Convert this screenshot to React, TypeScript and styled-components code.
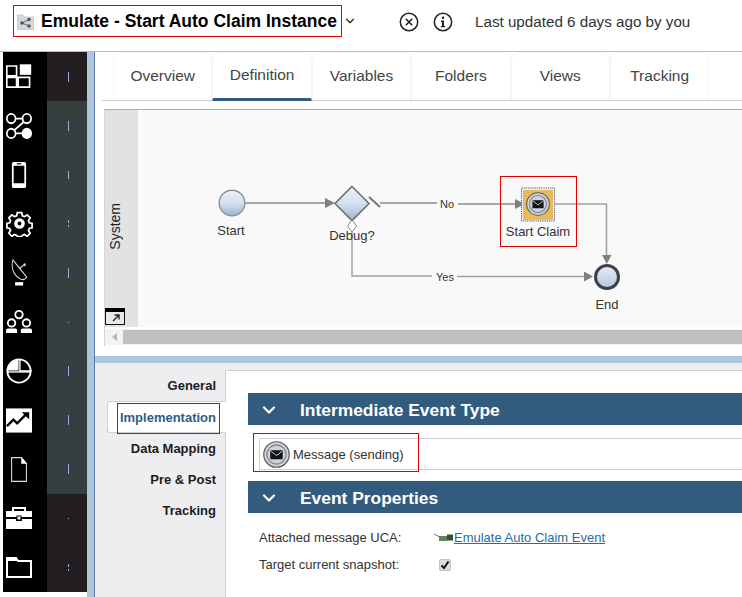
import { ReactNode } from 'react';
import styled, { createGlobalStyle } from 'styled-components';
import { ChevronDown } from 'lucide-react';

const GlobalStyle = createGlobalStyle`
  html, body {
    margin: 0;
    padding: 0;
    background: #fff;
    font-family: "Liberation Sans", Arial, sans-serif;
    color: #222;
  }
`;

const Page = styled.div`
  width: 742px;
  height: 597px;
  overflow: hidden;
  display: flex;
  flex-direction: column;
`;

const Header = styled.header`
  height: 51px;
  flex-shrink: 0;
  display: flex;
  align-items: flex-start;
  border-bottom: 1px solid #bdbdbd;
  box-sizing: content-box;
`;

const TitleBox = styled.div`
  margin: 5px 0 0 13px;
  width: 329px;
  height: 32px;
  flex-shrink: 0;
  box-sizing: border-box;
  border: 1px solid #e00000;
  display: flex;
  align-items: center;
  gap: 7px;
  padding-left: 3px;

  svg {
    flex-shrink: 0;
  }
`;

const Title = styled.h1`
  margin: 0;
  font-size: 17.5px;
  font-weight: 700;
  color: #000;
  white-space: nowrap;
`;

const TitleCaret = styled.div`
  width: 14px;
  margin: 14px 0 0 1px;
  display: flex;
  color: #222;
`;

const HeaderIcons = styled.div`
  display: flex;
  gap: 14px;
  margin: 12px 0 0 42px;
`;

const Updated = styled.div`
  margin: 13px 0 0 22px;
  font-size: 15.2px;
  color: #333;
  white-space: nowrap;
`;

const Body = styled.div`
  flex: 1;
  min-height: 0;
  display: flex;
`;

const Sidebar = styled.nav`
  margin-left: 3px;
  width: 84px;
  height: 540px;
  flex-shrink: 0;
  display: flex;
  flex-direction: column;
`;

const RailRow = styled.div`
  flex: 1;
  display: flex;
`;

const RailIcon = styled.div`
  width: 44px;
  box-sizing: border-box;
  padding-right: 12px;
  background: #000;
  display: flex;
  align-items: center;
  justify-content: center;
`;

const RailTickCell = styled.div<{ $dark: boolean }>`
  width: 40px;
  box-sizing: border-box;
  padding-left: 3px;
  background: ${p => (p.$dark ? '#231f20' : '#353f40')};
  display: flex;
  flex-direction: column;
  align-items: center;
  justify-content: center;
  gap: 2px;
`;

const Tick = styled.span<{ $h: number }>`
  width: 1px;
  height: ${p => p.$h}px;
  background: #8eaee8;
`;

const Splitter = styled.div`
  width: 7px;
  flex-shrink: 0;
  background: #adc6d9;
  border-right: 1px solid #5f78a8;
`;

const Main = styled.main`
  flex: 1;
  min-width: 0;
  display: flex;
  flex-direction: column;
`;

const TabBar = styled.div`
  height: 48px;
  flex-shrink: 0;
  margin-left: 7px;
  padding-left: 11px;
  display: flex;
  border-bottom: 1px solid #c3cbd6;
`;

const Tab = styled.div<{ $active?: boolean }>`
  width: 99.4px;
  box-sizing: border-box;
  display: flex;
  align-items: center;
  justify-content: center;
  padding-bottom: 1px;
  font-size: 15.5px;
  color: #444;
  border: 1px solid #f5f5f5;
  border-bottom: ${p => (p.$active ? '3px solid #335b7e' : 'none')};
  border-radius: 8px 8px 0 0;
  margin-bottom: ${p => (p.$active ? '-1px' : '0')};
`;

const Diagram = styled.section`
  margin: 8px 0 0 9px;
  height: 236px;
  flex-shrink: 0;
  display: flex;
  flex-direction: column;
  border-top: 1px solid #aaa;
  border-left: 1px solid #d5d5d5;
`;

const DiagramBody = styled.div`
  height: 217px;
  flex-shrink: 0;
  display: flex;
`;

const Lane = styled.div`
  width: 33px;
  flex-shrink: 0;
  box-sizing: border-box;
  padding: 15px 13px 0 0;
  position: relative;
  background: #e2e2e2;
  display: flex;
  align-items: center;
  justify-content: center;
`;

const LaneName = styled.span`
  writing-mode: vertical-rl;
  transform: rotate(180deg);
  font-size: 14px;
  color: #222;
`;

const ExpandButton = styled.div`
  position: absolute;
  left: 0;
  bottom: 2px;
  width: 20px;
  height: 17px;
  display: flex;
`;

const Canvas = styled.div`
  flex: 1;
  position: relative;
  background: #f9f9f9;
  overflow: hidden;
`;

const DiagramSvg = styled.svg`
  position: absolute;
  inset: 0;
  width: 100%;
  height: 100%;
`;

const NodeLabel = styled.span<{ $x: number; $y: number; $size?: number }>`
  position: absolute;
  left: ${p => p.$x - 138}px;
  top: ${p => p.$y - 110}px;
  transform: translate(-50%, -50%);
  font-size: ${p => p.$size ?? 13}px;
  line-height: 1;
  color: #333;
  white-space: nowrap;
`;

const Annotation = styled.div`
  position: absolute;
  left: 362px;
  top: 66px;
  width: 77px;
  height: 71px;
  box-sizing: border-box;
  border: 1px solid #e00000;
`;

const ScrollBar = styled.div`
  height: 16px;
  margin-top: 2px;
  flex-shrink: 0;
  display: flex;
  align-items: center;
  background: #f3f3f3;
`;

const ScrollArrow = styled.div`
  width: 18px;
  flex-shrink: 0;
  display: flex;
  justify-content: center;
  &::before {
    content: '';
    border-style: solid;
    border-width: 4px 5px 4px 0;
    border-color: transparent #b5b5b5 transparent transparent;
  }
`;

const ScrollThumb = styled.div`
  flex: 1;
  height: 14px;
  background: #bfbfbf;
`;

const Band = styled.div`
  height: 7px;
  margin-top: 10px;
  flex-shrink: 0;
  background: #adc6d9;
`;

const Lower = styled.div`
  flex: 1;
  min-height: 0;
  display: flex;
  padding-top: 7px;
  background: #eeeef0;
`;

const SideTabs = styled.div`
  width: 130px;
  flex-shrink: 0;
  display: flex;
  flex-direction: column;
`;

const SideTab = styled.div<{ $active?: boolean }>`
  height: 31px;
  margin-left: 12px;
  padding-right: 9px;
  display: flex;
  align-items: center;
  justify-content: flex-end;
  font-size: 13px;
  font-weight: 700;
  color: ${p => (p.$active ? '#335b7e' : '#1c1c1c')};
  box-sizing: border-box;
  ${p =>
    p.$active &&
    `
    background: #fff;
    height: 32px;
    margin-right: -1px;
    padding-right: 10px;
    position: relative;
    z-index: 1;
    border: 1px solid #cfcfcf;
    border-right: none;
    border-radius: 3px 0 0 3px;
  `}
`;

const ActiveLabel = styled.span`
  position: relative;
`;

const ActiveOutline = styled.span`
  position: absolute;
  left: -3px;
  top: -7px;
  width: 103px;
  height: 31px;
  box-sizing: border-box;
  border: 1px solid #e00000;
`;

const Content = styled.div`
  flex: 1;
  min-width: 0;
  background: #fff;
  border-top: 1px solid #cfcfcf;
  border-left: 1px solid #cfcfcf;
  padding: 22px 0 0 22px;
`;

const SectionHeader = styled.div`
  height: 32px;
  box-sizing: border-box;
  padding-top: 2px;
  display: flex;
  align-items: center;
  background: #335b7e;
  color: #fff;
  font-size: 17.4px;
  font-weight: 700;
  white-space: nowrap;
`;

const SectionCaret = styled.div`
  width: 52px;
  flex-shrink: 0;
  display: flex;
  padding-left: 11px;
  box-sizing: border-box;
`;

const EventRow = styled.div`
  position: relative;
  height: 32px;
  margin: 13px 0 11px 11px;
  box-sizing: border-box;
  border: 1px solid #c9d0dc;
  border-right: none;
  display: flex;
  align-items: center;
  gap: 3px;
  padding-left: 3px;
  font-size: 13px;
  color: #333;
`;

const EventAnnotation = styled.div`
  position: absolute;
  left: -7px;
  top: -6px;
  width: 166px;
  height: 39px;
  box-sizing: border-box;
  border: 1px solid #e00000;
`;

const PropList = styled.div`
  margin-left: 11px;
  padding-top: 11px;
`;

const PropRow = styled.div`
  display: grid;
  grid-template-columns: 175px 1fr;
  align-items: center;
  font-size: 13px;
  color: #333;
  height: 27px;
`;

const LinkCell = styled.div`
  display: flex;
  align-items: center;
  gap: 1px;
`;

const UcaLink = styled.a`
  color: #2b6c9f;
  text-decoration: underline;
`;

const Checkbox = styled.div`
  width: 12px;
  height: 12px;
  margin-left: 5px;
  border-radius: 2px;
  background: #dcdcdc;
  border: 1px solid #c4c4c4;
  box-sizing: border-box;
  display: flex;
  align-items: center;
  justify-content: center;
`;

const Stroke = { fill: 'none', stroke: '#fff', strokeWidth: 2 };

const railIcons: ReactNode[] = [
  <svg width="26" height="25" viewBox="0 0 32 30">
    <path d="M1 2h12v12H1zM1 16h12v12H1zM15 16h14v12H15z" {...Stroke} />
    <rect x="17" y="0" width="14" height="13" fill="#fff" />
  </svg>,
  <svg width="26" height="26" viewBox="0 0 30 28" preserveAspectRatio="none">
    <path d="M11 6h9M20 10 9 19M11 22h9" {...Stroke} />
    <circle cx="6" cy="6" r="5" {...Stroke} />
    <circle cx="24" cy="6" r="5" {...Stroke} />
    <circle cx="6" cy="22" r="5" {...Stroke} />
    <circle cx="24" cy="22" r="6" fill="#fff" />
  </svg>,
  <svg width="16" height="26" viewBox="0 0 18 28" preserveAspectRatio="none">
    <path fillRule="evenodd" fill="#fff" d="M1 2a2 2 0 0 1 2-2h12a2 2 0 0 1 2 2v24a2 2 0 0 1-2 2H3a2 2 0 0 1-2-2zM3 4v19h12V4z" />
    <rect x="6.500" y="1.300" width="5" height="1.200" fill="#000" />
  </svg>,
  <svg width="27" height="27" viewBox="0 0 28 28">
    <path
      d="M11.500 1.500h5l.8 3.600 2.400 1 3.100-2 3.500 3.500-2 3.100 1 2.400 3.200.8v5l-3.200.8-1 2.400 2 3.100-3.500 3.500-3.100-2-2.400 1-.8 1.300h-5l-.8-1.300-2.400-1-3.100 2-3.500-3.500 2-3.100-1-2.400-3.200-.8v-5l3.200-.8 1-2.400-2-3.100 3.500-3.500 3.100 2 2.400-1z"
      transform="translate(1.400 1.400) scale(0.9)"
      {...Stroke}
    />
    <circle cx="14" cy="14" r="5.500" fill="#fff" />
    <circle cx="14" cy="14" r="2" fill="#000" />
  </svg>,
  <svg width="19" height="27" viewBox="0 0 26 28" preserveAspectRatio="none">
    <path d="M4 1C1 8 4 17 15 21 19 22 22 20 23 19Z" fill="none" stroke="#ddd" strokeWidth="1.300" />
    <path d="M13 10l6-4" stroke="#ddd" strokeWidth="1.300" />
    <circle cx="20" cy="6" r="1.500" fill="#ddd" />
    <rect x="7" y="24" width="11" height="3.500" fill="#fff" />
  </svg>,
  <svg width="26" height="24" viewBox="0 0 28 26" preserveAspectRatio="none">
    <circle cx="14" cy="5" r="4" {...Stroke} />
    <circle cx="6" cy="14" r="4" {...Stroke} />
    <circle cx="22" cy="14" r="4" {...Stroke} />
    <path d="M0 25v-3q0-2 2-2h8q2 0 2 2v3zM16 25v-3q0-2 2-2h8q2 0 2 2v3z" fill="#fff" />
  </svg>,
  <svg width="26" height="26" viewBox="0 0 28 28">
    <circle cx="14" cy="14" r="12.500" {...Stroke} />
    <path d="M1.500 13.500A12.500 12.500 0 0 1 13.500 1.500v12z" fill="#fff" />
    <path d="M15 1.500v12.500h12.500" stroke="#fff" strokeWidth="1.500" fill="none" />
    <path d="M1 15h26" stroke="#fff" strokeWidth="1.500" />
  </svg>,
  <svg width="26" height="25" viewBox="0 0 28 26">
    <rect width="28" height="26" fill="#fff" />
    <path d="M1 19l7-7 4 4 9-9" fill="none" stroke="#000" strokeWidth="2.500" />
    <path d="M17 4h8v8z" fill="#000" />
  </svg>,
  <svg width="16" height="25" viewBox="0 0 18 26" preserveAspectRatio="none">
    <path d="M.7.7h11l5.600 6v18.600H.7z" fill="none" stroke="#ddd" strokeWidth="1.200" />
    <path d="M11.500 0 18 7h-6.500z" fill="#fff" />
  </svg>,
  <svg width="26" height="22" viewBox="0 0 26 22">
    <path d="M7 4V1h12v3" {...Stroke} />
    <path d="M0 4h26v6H0zM0 12h10v2h6v-2h10v10H0z" fill="#fff" />
    <rect x="11" y="9" width="4" height="4" fill="#fff" stroke="#000" />
  </svg>,
  <svg width="26" height="21" viewBox="0 0 26 21">
    <path d="M1 4V1h9l2 3h13v16H1z" {...Stroke} />
    <path d="M0 0h10l2 4H0z" fill="#fff" />
  </svg>,
];

const railTicks: number[][] = [[10], [10], [8], [3, 2], [10], [1], [10], [10], [10], [1], [3, 2]];

const darkRows = [0, 9, 10];

const tabs = ['Overview', 'Definition', 'Variables', 'Folders', 'Views', 'Tracking'];

const sideTabs = ['General', 'Implementation', 'Data Mapping', 'Pre & Post', 'Tracking'];

const SectionChevron = () => <ChevronDown size={20} strokeWidth={2.6} color="#fff" />;

const MessageEvent = ({ size }: { size: number }) => (
  <svg width={size} height={size} viewBox="0 0 28 28">
    <circle cx="14" cy="14" r="13.200" fill="#d8d8d8" stroke="#555" strokeWidth="1.200" />
    <circle cx="14" cy="14" r="10.800" fill="#8b8f94" />
    <circle cx="14" cy="14" r="9.200" fill="#ccd3e0" />
    <rect x="7.500" y="9.500" width="13" height="9.500" rx="1" fill="#111" />
    <path d="M8 10.500l6 4.500 6-4.500" fill="none" stroke="#ddd" strokeWidth="1" />
  </svg>
);

const FlowDiagram = () => (
  <DiagramSvg viewBox="138 110 604 217">
    <defs>
      <linearGradient id="node" x1="0" y1="0" x2="0" y2="1">
        <stop offset="0" stopColor="#eef2fa" />
        <stop offset="0.5" stopColor="#d5dfef" />
        <stop offset="1" stopColor="#9fb4d2" />
      </linearGradient>
      <linearGradient id="end" x1="0" y1="0" x2="0" y2="1">
        <stop offset="0" stopColor="#e8eef8" />
        <stop offset="1" stopColor="#b4c6de" />
      </linearGradient>
    </defs>
    <g stroke="#8c8c8c" strokeWidth="1.300" fill="none">
      <path d="M245 203h82M380 203h57M458 204h60" />
      <path d="M352 232v44h80M457 276.500h128" strokeWidth="1.500" stroke="#a0a0a0" />
      <path d="M555 204h51.500v54" strokeWidth="1.500" stroke="#a0a0a0" />
      <path d="M369 197l11 10" strokeWidth="2" stroke="#777" />
    </g>
    <g fill="#808080">
      <path d="M325 198l10 5-10 5z" />
      <path d="M515 199l10 5-10 5z" />
      <path d="M584 271.500l9 5-9 5z" />
      <path d="M602 255h9.500l-4.750 9z" />
    </g>
    <circle cx="232" cy="203" r="12.800" fill="url(#node)" stroke="#8a9097" strokeWidth="1.400" />
    <path d="M352 186.500l17 17-17 17-17-17z" fill="url(#node)" stroke="#6e7276" strokeWidth="1.600" />
    <path d="M352 220l4.500 6-4.500 6-4.500-6z" fill="#fff" stroke="#888" strokeWidth="1" />
    <rect x="521.500" y="188" width="33" height="33" fill="#f2f2f2" stroke="#555" strokeWidth="1" strokeDasharray="1.200 1" />
    <rect x="523" y="190" width="30" height="30" fill="#e8b95e" />
    <g transform="translate(526 192)">
      <MessageEvent size={24} />
    </g>
    <circle cx="607" cy="277" r="11.500" fill="url(#end)" stroke="#3d4248" strokeWidth="3" />
  </DiagramSvg>
);

const App = () => (
  <Page>
    <GlobalStyle />
    <Header>
      <TitleBox>
        <svg width="17" height="17" viewBox="0 0 17 17">
          <path d="M0 2h6l1 2h10v13H0z" fill="#d4d6d8" stroke="#bbb" strokeWidth="0.600" />
          <circle cx="5" cy="10" r="1.700" fill="#41536a" />
          <circle cx="12" cy="6.500" r="1.700" fill="#41536a" />
          <circle cx="12" cy="13" r="1.700" fill="#41536a" />
          <path d="M5 10l7-3.500M5 10l7 3" stroke="#41536a" strokeWidth="0.800" />
        </svg>
        <Title>Emulate - Start Auto Claim Instance</Title>
      </TitleBox>
      <TitleCaret>
        <ChevronDown size={14} strokeWidth={2} />
      </TitleCaret>
      <HeaderIcons>
        <svg width="20" height="20" viewBox="0 0 20 20">
          <circle cx="10" cy="10" r="8.700" fill="none" stroke="#222" strokeWidth="1.500" />
          <path d="M6.800 6.800l6.400 6.400M13.200 6.800l-6.400 6.400" stroke="#222" strokeWidth="1.600" />
        </svg>
        <svg width="20" height="20" viewBox="0 0 20 20">
          <circle cx="10" cy="10" r="8.700" fill="none" stroke="#222" strokeWidth="1.500" />
          <circle cx="10" cy="5.800" r="1.300" fill="#222" />
          <path d="M8 8.600h3v5.400h1.200v1.300H7.800V14H9V9.900H8z" fill="#222" />
        </svg>
      </HeaderIcons>
      <Updated>Last updated 6 days ago by you</Updated>
    </Header>
    <Body>
      <Sidebar>
        {railIcons.map((icon, i) => (
          <RailRow key={i}>
            <RailIcon>{icon}</RailIcon>
            <RailTickCell $dark={darkRows.includes(i)}>
              {railTicks[i].map((h, j) => (
                <Tick key={j} $h={h} />
              ))}
            </RailTickCell>
          </RailRow>
        ))}
      </Sidebar>
      <Splitter />
      <Main>
        <TabBar>
          {tabs.map(tab => (
            <Tab key={tab} $active={tab === 'Definition'}>
              {tab}
            </Tab>
          ))}
        </TabBar>
        <Diagram>
          <DiagramBody>
            <Lane>
              <LaneName>System</LaneName>
              <ExpandButton>
                <svg width="20" height="17" viewBox="0 0 20 17">
                  <rect x="0.500" y="0.500" width="19" height="16" fill="#e8e8e8" stroke="#111" />
                  <rect width="20" height="4" fill="#000" />
                  <path d="M8 13l6-6M9.500 7H14v4.500" fill="none" stroke="#222" strokeWidth="1.400" />
                </svg>
              </ExpandButton>
            </Lane>
            <Canvas>
              <FlowDiagram />
              <NodeLabel $x={231} $y={230}>Start</NodeLabel>
              <NodeLabel $x={352} $y={235}>Debug?</NodeLabel>
              <NodeLabel $x={447} $y={204} $size={11}>No</NodeLabel>
              <NodeLabel $x={445} $y={277} $size={11}>Yes</NodeLabel>
              <NodeLabel $x={538} $y={231}>Start Claim</NodeLabel>
              <NodeLabel $x={607} $y={304}>End</NodeLabel>
              <Annotation />
            </Canvas>
          </DiagramBody>
          <ScrollBar>
            <ScrollArrow />
            <ScrollThumb />
          </ScrollBar>
        </Diagram>
        <Band />
        <Lower>
          <SideTabs>
            {sideTabs.map(tab =>
              tab === 'Implementation' ? (
                <SideTab key={tab} $active>
                  <ActiveLabel>
                    {tab}
                    <ActiveOutline />
                  </ActiveLabel>
                </SideTab>
              ) : (
                <SideTab key={tab}>{tab}</SideTab>
              )
            )}
          </SideTabs>
          <Content>
            <SectionHeader>
              <SectionCaret>
                <SectionChevron />
              </SectionCaret>
              Intermediate Event Type
            </SectionHeader>
            <EventRow>
              <MessageEvent size={27} />
              Message (sending)
              <EventAnnotation />
            </EventRow>
            <SectionHeader>
              <SectionCaret>
                <SectionChevron />
              </SectionCaret>
              Event Properties
            </SectionHeader>
            <PropList>
              <PropRow>
                Attached message UCA:
                <LinkCell>
                  <svg width="19" height="9" viewBox="0 0 19 9">
                    <path d="M0 1l5 2.500" stroke="#5f7f5f" strokeWidth="1" />
                    <rect x="5" y="3" width="8" height="5" fill="#5f7f5f" />
                    <rect x="13" y="1.500" width="6" height="6" fill="#33503a" />
                  </svg>
                  <UcaLink>Emulate Auto Claim Event</UcaLink>
                </LinkCell>
              </PropRow>
              <PropRow>
                Target current snapshot:
                <Checkbox>
                  <svg width="10" height="10" viewBox="0 0 10 10">
                    <path d="M1.500 5.500l2.500 2.500 4.500-6.500" fill="none" stroke="#111" strokeWidth="2" />
                  </svg>
                </Checkbox>
              </PropRow>
            </PropList>
          </Content>
        </Lower>
      </Main>
    </Body>
  </Page>
);

export default App;
